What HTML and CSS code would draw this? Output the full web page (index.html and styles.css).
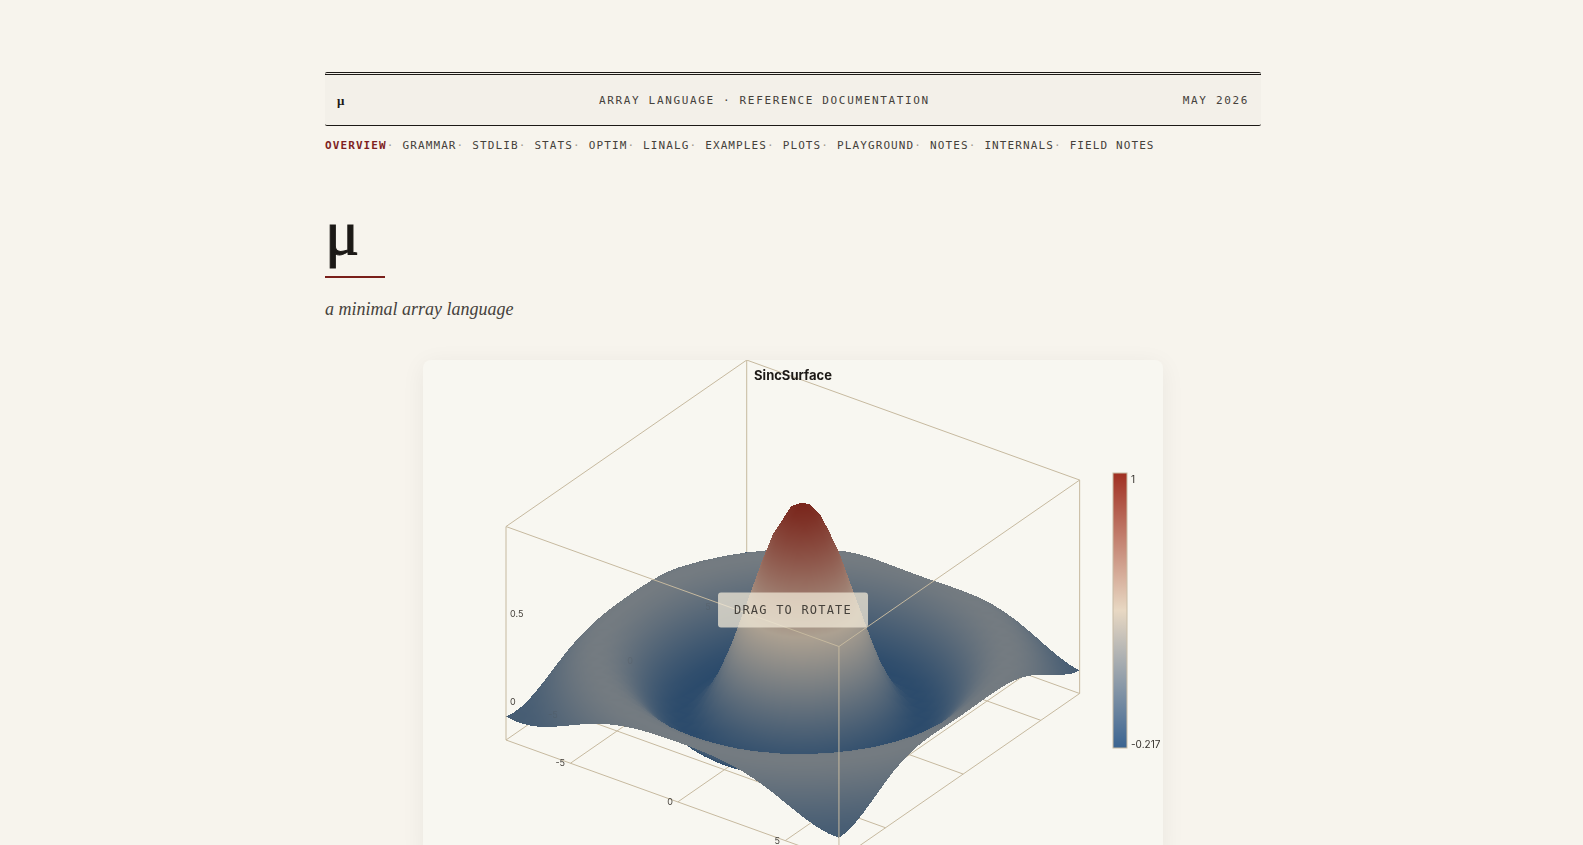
FILE: index.html
```
<!DOCTYPE html>
<html lang="en">
<head>
    <meta charset="UTF-8">
    <meta name="viewport" content="width=device-width, initial-scale=1.0">
    <title>μ - a minimal array language</title>
    <link rel="stylesheet" href="styles.css">
</head>
<body>

<div class="page">

    <header class="masthead">
        <span class="masthead-mark">μ</span>
        <span>Array Language · Reference Documentation</span>
        <span>May 2026</span>
    </header>

    <nav class="nav">
        <a href="#overview" class="active">Overview</a>
        <a href="#grammar">Grammar</a>
        <a href="#stdlib">Stdlib</a>
        <a href="#stats">Stats</a>
        <a href="#optim">Optim</a>
        <a href="#linalg">Linalg</a>
        <a href="#examples">Examples</a>
        <a href="#plots">Plots</a>
        <a href="#playground">Playground</a>
        <a href="#notes">Notes</a>
        <a href="#internals">Internals</a>
        <a href="#field-notes">Field Notes</a>
    </nav>

    <main>
        <h1 class="title">μ</h1>
        <p class="tagline">a minimal array language</p>

        <!-- surface plot -->
        <figure class="plot" id="plot">
            <canvas class="plot-canvas" id="surface" width="740" height="500"></canvas>
            <svg class="plot-labels" viewBox="0 0 740 500" aria-hidden="true">
                <defs>
                    <linearGradient id="ramp" x1="0" y1="0" x2="0" y2="1">
                        <stop offset="0" stop-color="#a03022"/>
                        <stop offset="0.5" stop-color="#e8d8c3"/>
                        <stop offset="1" stop-color="#3b6491"/>
                    </linearGradient>
                </defs>
                <text class="plot-title" x="370" y="20">SincSurface</text>
                <g id="ticks"></g>
                <rect class="bar" x="690" y="113" width="14" height="275" fill="url(#ramp)"/>
                <text class="bar-label" x="708" y="123">1</text>
                <text class="bar-label" x="708" y="388">-0.217</text>
            </svg>
            <figcaption class="hint">Drag to rotate</figcaption>
        </figure>
    </main>

</div>

<script src="plot.js"></script>
</body>
</html>
```
FILE: styles.css
```
body {
    margin: 0;
    padding: 72px 22px 0 25px;
    background-color: #f7f4ed;
    color: #1c1916;
    font-family: "Liberation Serif", serif;
}
.page {
    max-width: 936px;
    margin: 0 auto;
}
.masthead {
    display: flex;
    justify-content: space-between;
    align-items: center;
    padding: 17px 12px 15px;
    border-top: 3px double #1c1916;
    border-bottom: 1px solid #1c1916;
    border-radius: 2px;
    background-color: #f3f0e9;
    color: #45413b;
    font-family: "DejaVu Sans Mono", monospace;
    font-size: 11px;
    line-height: 18px;
    letter-spacing: 0.15em;
    text-transform: uppercase;
}
.masthead-mark {
    color: #1c1916;
    font-family: "Liberation Serif", serif;
    font-size: 13px;
    font-weight: bold;
    line-height: 16px;
    text-transform: none;
}
.nav {
    display: flex;
    flex-wrap: wrap;
    gap: 8px;
    padding-top: 11px;
    font-family: "DejaVu Sans Mono", monospace;
    font-size: 11px;
    line-height: 18px;
    letter-spacing: 0.1em;
    text-transform: uppercase;
}
.nav a {
    color: #45413b;
    text-decoration: none;
}
.nav a.active {
    color: #7f1f1f;
    font-weight: bold;
}
.nav a:not(:last-child)::after {
    content: "·";
    color: #a39c90;
    font-weight: normal;
}
.title {
    margin: 56px 0 0;
    font-size: 64px;
    font-weight: normal;
    line-height: 44px;
    -webkit-text-stroke: 1px #1c1916;
}
.title::after {
    content: "";
    display: block;
    width: 60px;
    height: 2px;
    margin-top: 21px;
    background-color: #7a1f1a;
}
.tagline {
    margin: 16px 0 36px;
    color: #45413b;
    font-size: 18px;
    font-style: italic;
    line-height: 30px;
}
.plot {
    position: relative;
    max-width: 740px;
    margin: 0 auto;
    border-radius: 8px;
    overflow: hidden;
    background-color: #f8f7f1;
    box-shadow: 0 4px 24px rgba(28, 25, 22, 0.06);
    font-family: Inter, sans-serif;
}
.plot-canvas {
    display: block;
    width: 100%;
    height: auto;
    cursor: grab;
}
.plot-labels {
    position: absolute;
    inset: 0;
    width: 100%;
    height: 100%;
    pointer-events: none;
}
.plot-title {
    fill: #1c1916;
    font-size: 13px;
    font-weight: bold;
    text-anchor: middle;
}
.tick {
    fill: #45413b;
    font-size: 9px;
}
.tick.behind {
    opacity: 0.15;
}
.bar {
    stroke: #c8bca5;
    stroke-width: 1px;
}
.bar-label {
    fill: #34302b;
    font-size: 10px;
}
.hint {
    position: absolute;
    top: 50%;
    left: 50%;
    transform: translate(-50%, -50%);
    padding: 8px 16px;
    border-radius: 3px;
    background-color: rgba(240, 232, 215, 0.75);
    color: #45413b;
    font-family: "DejaVu Sans Mono", monospace;
    font-size: 12px;
    line-height: 19px;
    letter-spacing: 0.1em;
    text-transform: uppercase;
    white-space: nowrap;
    pointer-events: none;
}
```
FILE: plot.js
```
const canvas = document.getElementById("surface");
const ctx = canvas.getContext("2d");
const W = canvas.width;
const H = canvas.height;

const LO = -8, HI = 7.5, STEP = 0.5;
const Z_LO = -0.217, Z_HI = 1;
const LINE = "#c6b99f";

// colour ramp, low to high
const RAMP = [[59, 102, 147], [236, 220, 199], [166, 50, 36]];
const SHADE = 0.73;

function sinc(x, y) {
    const r = Math.hypot(x, y);
    return r === 0 ? 1 : Math.sin(r) / r;
}

// orthographic view of the box, d grows towards the viewer
function project(x, y, z) {
    return {
        x: 83 + (x - LO) * 21.48 + (y - LO) * 15.53,
        y: 380 + (x - LO) * 7.74 - (y - LO) * 10.74 - (z - Z_LO) * 175.4,
        d: x * 7.74 - y * 10.74 + z * 60,
        z: z
    };
}

function colour(z) {
    const t = Math.min(1, Math.max(0, (z - Z_LO) / (Z_HI - Z_LO))) * 2;
    const i = t < 1 ? 0 : 1;
    return RAMP[i].map((c, k) => (c + (RAMP[i + 1][k] - c) * (t - i)) * SHADE);
}

const image = ctx.createImageData(W, H);
const depth = new Float32Array(W * H).fill(-Infinity);

// fill one triangle with depth test and interpolated height
function triangle(a, b, c) {
    const area = (b.x - a.x) * (c.y - a.y) - (c.x - a.x) * (b.y - a.y);
    const x0 = Math.max(0, Math.floor(Math.min(a.x, b.x, c.x)));
    const x1 = Math.min(W - 1, Math.ceil(Math.max(a.x, b.x, c.x)));
    const y0 = Math.max(0, Math.floor(Math.min(a.y, b.y, c.y)));
    const y1 = Math.min(H - 1, Math.ceil(Math.max(a.y, b.y, c.y)));
    for (let y = y0; y <= y1; y++) {
        for (let x = x0; x <= x1; x++) {
            const px = x + 0.5, py = y + 0.5;
            const u = ((b.x - px) * (c.y - py) - (c.x - px) * (b.y - py)) / area;
            const v = ((c.x - px) * (a.y - py) - (a.x - px) * (c.y - py)) / area;
            const w = 1 - u - v;
            if (u < 0 || v < 0 || w < 0) continue;
            const i = y * W + x;
            const d = u * a.d + v * b.d + w * c.d;
            if (d <= depth[i]) continue;
            depth[i] = d;
            const rgb = colour(u * a.z + v * b.z + w * c.z);
            image.data.set([rgb[0], rgb[1], rgb[2], 255], i * 4);
        }
    }
}

function line(target, from, to) {
    const a = project(...from), b = project(...to);
    target.strokeStyle = LINE;
    target.lineWidth = 1;
    target.beginPath();
    target.moveTo(a.x, a.y);
    target.lineTo(b.x, b.y);
    target.stroke();
}

function point(x, y) {
    return project(x, y, sinc(x, y));
}

for (let x = LO; x < HI; x += STEP) {
    for (let y = LO; y < HI; y += STEP) {
        const a = point(x, y), b = point(x + STEP, y);
        const c = point(x + STEP, y + STEP), d = point(x, y + STEP);
        triangle(a, b, c);
        triangle(a, c, d);
    }
}

// box edges and floor grid behind the surface
line(ctx, [LO, HI, Z_LO], [LO, HI, Z_HI]);
line(ctx, [LO, LO, Z_LO], [LO, HI, Z_LO]);
line(ctx, [LO, HI, Z_LO], [HI, HI, Z_LO]);
for (const t of [-5, 0, 5]) {
    line(ctx, [t, LO, Z_LO], [t, HI, Z_LO]);
    line(ctx, [LO, t, Z_LO], [HI, t, Z_LO]);
}

const layer = document.createElement("canvas");
layer.width = W;
layer.height = H;
layer.getContext("2d").putImageData(image, 0, 0);
ctx.drawImage(layer, 0, 0);

// box edges in front
line(ctx, [LO, LO, Z_LO], [HI, LO, Z_LO]);
line(ctx, [HI, LO, Z_LO], [HI, HI, Z_LO]);
line(ctx, [LO, LO, Z_LO], [LO, LO, Z_HI]);
line(ctx, [HI, LO, Z_LO], [HI, LO, Z_HI]);
line(ctx, [HI, HI, Z_LO], [HI, HI, Z_HI]);
line(ctx, [LO, LO, Z_HI], [HI, LO, Z_HI]);
line(ctx, [HI, LO, Z_HI], [HI, HI, Z_HI]);
line(ctx, [HI, HI, Z_HI], [LO, HI, Z_HI]);
line(ctx, [LO, HI, Z_HI], [LO, LO, Z_HI]);

// tick labels
const ticks = document.getElementById("ticks");
function label(text, p, dx, dy, anchor, cls) {
    const el = document.createElementNS("http://www.w3.org/2000/svg", "text");
    el.setAttribute("class", cls);
    el.setAttribute("x", Math.round(p.x + dx));
    el.setAttribute("y", Math.round(p.y + dy));
    el.setAttribute("text-anchor", anchor);
    el.textContent = text;
    ticks.appendChild(el);
}
for (const t of [-5, 0, 5]) {
    label(t, project(t, LO, Z_LO), -5, 3, "end", "tick");
    label(t, project(LO, t, Z_LO), 0, 10, "middle", "tick behind");
}
label("0", project(LO, LO, 0), 4, 3, "start", "tick");
label("0.5", project(LO, LO, 0.5), 4, 3, "start", "tick");
```
